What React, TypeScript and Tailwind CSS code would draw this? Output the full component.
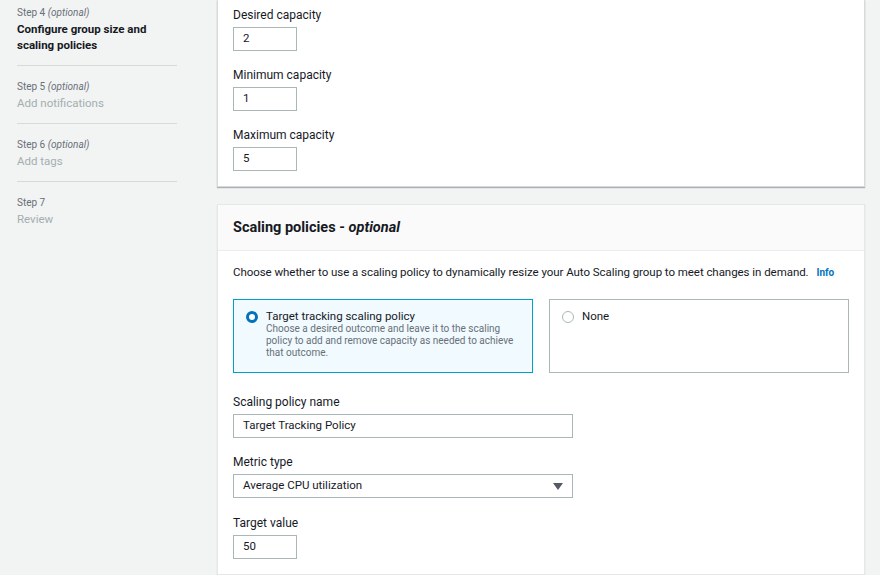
import React from "react";

const font = { fontFamily: "Roboto, 'Noto Sans', sans-serif" };

function NavItem({ step, optional, title, active, last }: { step: string; optional?: boolean; title: string; active?: boolean; last?: boolean }) {
  return (
    <div className={`${last ? "" : "border-b border-[#d5dbdb]"} pt-[4px] pb-[12px] mb-[10px]`}>
      <div className="text-[10px] leading-[14px] text-[#687078]">
        {step} {optional && <i>(optional)</i>}
      </div>
      {active ? (
        <div className="text-[11.5px] leading-[16px] font-bold text-[#16191f] mt-[1px]">{title}</div>
      ) : (
        <div className="text-[11.5px] leading-[16px] text-[#a3afb0] mt-[1px]">{title}</div>
      )}
    </div>
  );
}

function Field({ label, value, width, select, mt }: { label: string; value: string; width: string; select?: boolean; mt?: string }) {
  return (
    <div className={mt}>
      <div className="text-[12px] leading-[16px] text-[#16191f]">{label}</div>
      <div className={`${width} mt-[4px] h-[24px] border border-[#aab7b8] flex items-center px-[9px] text-[11.5px] text-[#16191f] relative`}>
        {value}
        {select && (
          <svg className="absolute right-[9px] top-[8px]" width="10" height="8" viewBox="0 0 10 8">
            <path d="M0 0 L10 0 L5 7 Z" fill="#545b64" />
          </svg>
        )}
      </div>
    </div>
  );
}

export default function App() {
  return (
    <div className="w-[880px] h-[575px] bg-[#f2f3f3] flex overflow-hidden" style={font}>
      <div className="w-[217px] shrink-0 pl-[17px] pr-[40px] pt-[2px]">
        <NavItem step="Step 4" optional title="Configure group size and scaling policies" active />
        <NavItem step="Step 5" optional title="Add notifications" />
        <NavItem step="Step 6" optional title="Add tags" />
        <NavItem step="Step 7" title="Review" last />
      </div>
      <div className="w-[648px] shrink-0 flex flex-col gap-[17px]">
        <div className="bg-white border-x border-b border-[#d5dbdb] shadow-[0_1px_1px_0_rgba(0,28,36,0.3)] px-[15px] pt-[7px] h-[187px]">
          <Field label="Desired capacity" value="2" width="w-[64px]" />
          <Field label="Minimum capacity" value="1" width="w-[64px]" mt="mt-[16px]" />
          <Field label="Maximum capacity" value="5" width="w-[64px]" mt="mt-[16px]" />
        </div>
        <div className="bg-white border border-[#e5e8e8] shadow-[0_1px_1px_0_rgba(0,28,36,0.15)] flex-1">
          <div className="h-[46px] bg-[#fafafa] border-b border-[#eaeded] px-[15px] flex items-center">
            <span className="text-[14.5px] font-bold text-[#16191f]">
              Scaling policies - <i>optional</i>
            </span>
          </div>
          <div className="px-[15px] pt-[13px]">
            <div className="text-[11.5px] leading-[16px] text-[#16191f] tracking-[-0.05px]">
              Choose whether to use a scaling policy to dynamically resize your Auto Scaling group to meet changes in demand.
              <span className="ml-[8px] text-[10px] font-bold text-[#0073bb]">Info</span>
            </div>
            <div className="flex gap-[16px] mt-[18px]">
              <div className="w-[300px] h-[74px] border border-[#00a1c9] bg-[#f1faff] flex pl-[12px] pt-[9px]">
                <div className="w-[12px] h-[12px] rounded-full border-[3.5px] border-[#0073bb] bg-white mt-[2px] shrink-0" />
                <div className="ml-[8px]">
                  <div className="text-[11.5px] leading-[14px] text-[#16191f]">Target tracking scaling policy</div>
                  <div className="text-[10px] leading-[12px] text-[#687078] w-[248px]">
                    Choose a desired outcome and leave it to the scaling policy to add and remove capacity as needed to achieve that outcome.
                  </div>
                </div>
              </div>
              <div className="w-[300px] h-[74px] border border-[#aab7b8] flex pl-[12px] pt-[9px]">
                <div className="w-[12px] h-[12px] rounded-full border border-[#aab7b8] bg-white mt-[2px] shrink-0" />
                <div className="ml-[8px] text-[11.5px] leading-[14px] text-[#16191f]">None</div>
              </div>
            </div>
            <Field label="Scaling policy name" value="Target Tracking Policy" width="w-[340px]" mt="mt-[21px]" />
            <Field label="Metric type" value="Average CPU utilization" width="w-[340px]" select mt="mt-[16px]" />
            <Field label="Target value" value="50" width="w-[64px]" mt="mt-[17px]" />
          </div>
        </div>
      </div>
    </div>
  );
}
